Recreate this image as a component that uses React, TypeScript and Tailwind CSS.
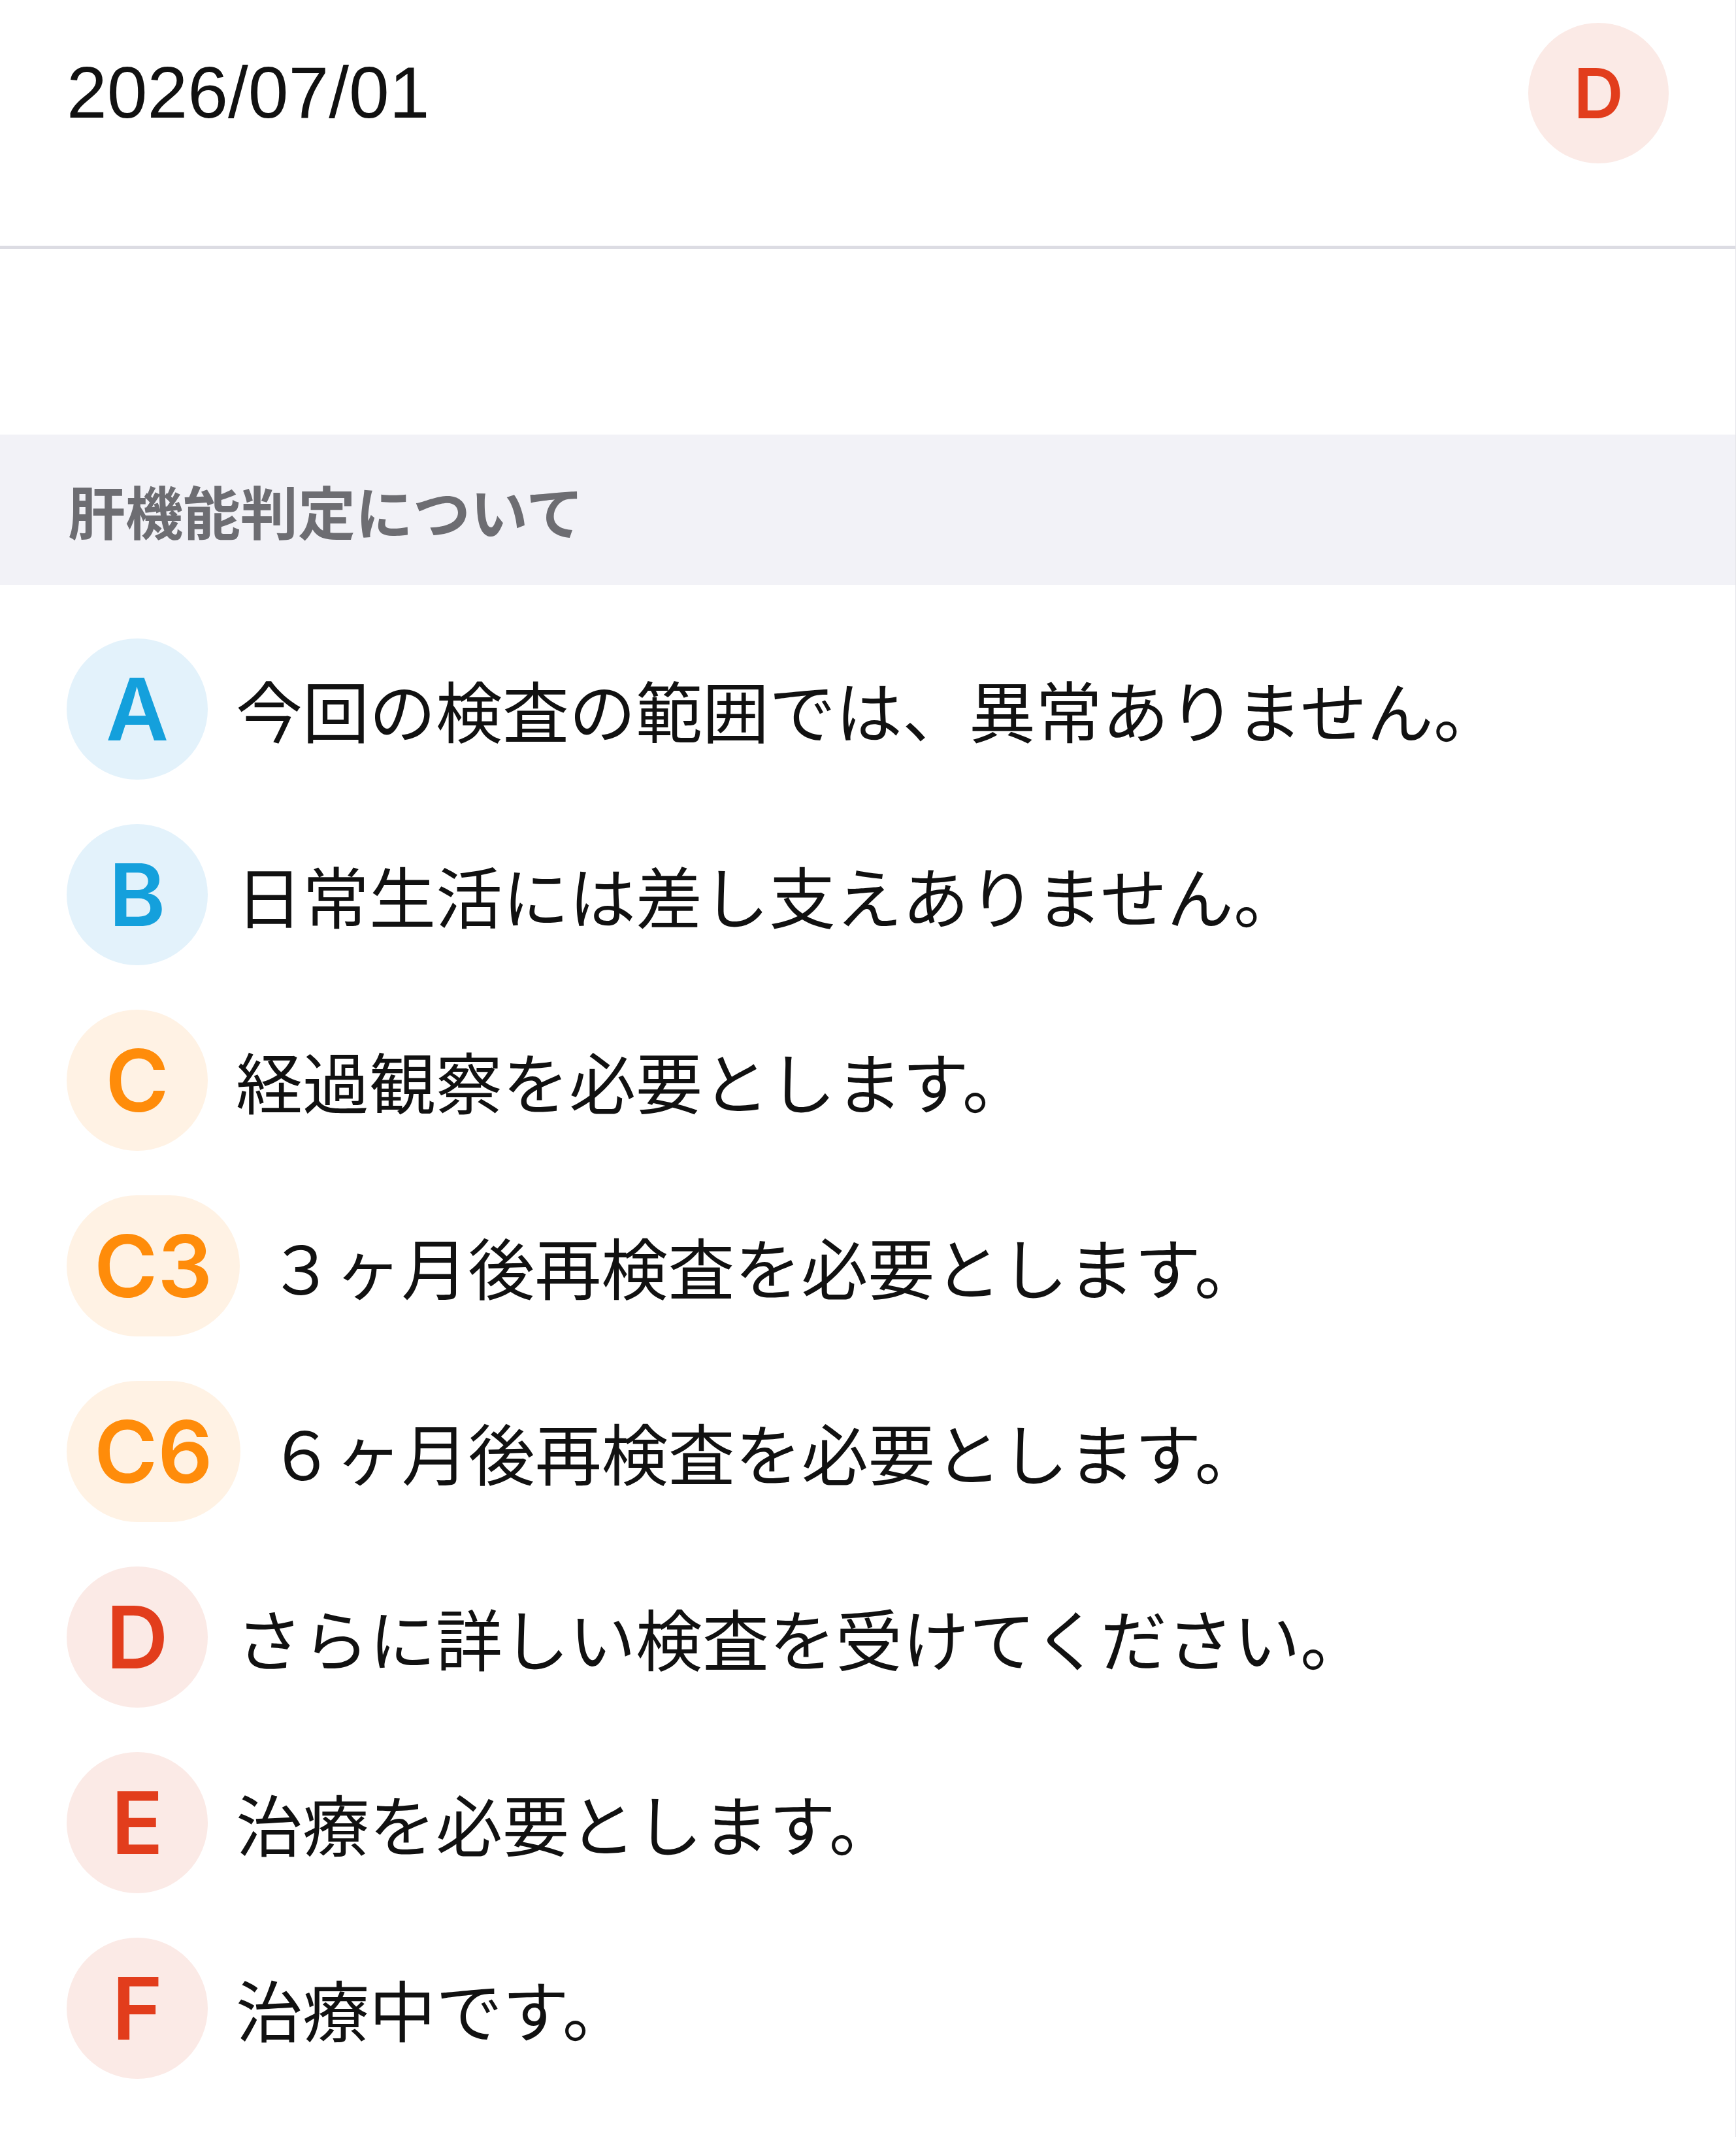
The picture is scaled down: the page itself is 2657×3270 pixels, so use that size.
import React from "react";

type Grade = {
    code: string;
    text: string;
    tone: "blue" | "orange" | "red";
};

const grades: Grade[] = [
    { code: "A", text: "今回の検査の範囲では、異常ありません。", tone: "blue" },
    { code: "B", text: "日常生活には差し支えありません。", tone: "blue" },
    { code: "C", text: "経過観察を必要とします。", tone: "orange" },
    { code: "C3", text: "３ヶ月後再検査を必要とします。", tone: "orange" },
    { code: "C6", text: "６ヶ月後再検査を必要とします。", tone: "orange" },
    { code: "D", text: "さらに詳しい検査を受けてください。", tone: "red" },
    { code: "E", text: "治療を必要とします。", tone: "red" },
    { code: "F", text: "治療中です。", tone: "red" },
];

const toneClass = {
    blue: "bg-[#e3f2fb] text-[#14a0dc]",
    orange: "bg-[#fff2e4] text-[#ff8c0a]",
    red: "bg-[#fbeae6] text-[#e23d1c]",
};

const GradeBadge = ({ code, tone }: { code: string; tone: Grade["tone"] }) => {
    return (
        <div
            className={`flex h-[216px] min-w-[216px] shrink-0 items-center justify-center rounded-full px-[42px] font-['Inter',sans-serif] text-[132px] font-semibold leading-none ${toneClass[tone]}`}
        >
            {code}
        </div>
    );
};

export default function App() {
    return (
        <div className="min-h-screen w-full border-r border-[#e5e5ea] bg-white">
            {/* header */}
            <div className="flex h-[376px] items-start justify-between px-[102px] pt-[35px]">
                <div className="flex h-[215px] items-center font-['Liberation_Sans',sans-serif] text-[111px] leading-none text-[#111111]">
                    2026/07/01
                </div>
                <div className="flex h-[215px] w-[215px] items-center justify-center rounded-full bg-[#fbeae6] font-['Inter',sans-serif] text-[106px] font-semibold leading-none text-[#e23d1c]">
                    D
                </div>
            </div>
            <div className="h-[5px] bg-[#dcdce3]" />

            <div className="h-[284px]" />

            {/* section title */}
            <div className="flex h-[230px] items-center bg-[#f2f2f7] px-[104px] font-['Noto_Sans_CJK_JP',sans-serif] text-[88px] font-semibold text-[#6d6d72]">
                肝機能判定について
            </div>

            {/* grade list */}
            <div className="pt-[48px] pb-[55px]">
                {grades.map((g) => (
                    <div key={g.code} className="flex h-[284px] items-center gap-[43px] px-[102px]">
                        <GradeBadge code={g.code} tone={g.tone} />
                        <span className="font-['Noto_Sans_CJK_JP',sans-serif] text-[102px] leading-none text-[#111111]">
                            {g.text}
                        </span>
                    </div>
                ))}
            </div>
        </div>
    );
}
